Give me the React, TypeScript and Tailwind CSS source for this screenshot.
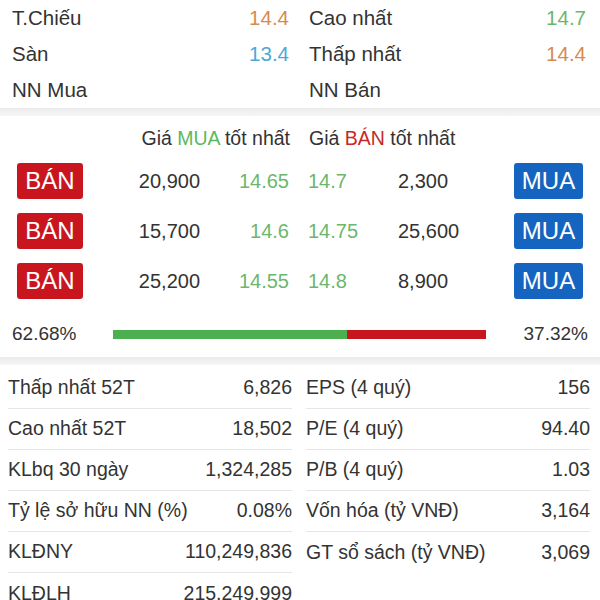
const summary = [
  { l: "T.Chiếu", v: "14.4", vc: "text-[#d88a4f]", r: "Cao nhất", rv: "14.7", rvc: "text-[#6cb76c]" },
  { l: "Sàn", v: "13.4", vc: "text-[#4aa9d7]", r: "Thấp nhất", rv: "14.4", rvc: "text-[#d88a4f]" },
  { l: "NN Mua", v: "", vc: "", r: "NN Bán", rv: "", rvc: "" },
];

const book = [
  { bidVol: "20,900", bid: "14.65", ask: "14.7", askVol: "2,300" },
  { bidVol: "15,700", bid: "14.6", ask: "14.75", askVol: "25,600" },
  { bidVol: "25,200", bid: "14.55", ask: "14.8", askVol: "8,900" },
];

const leftStats = [
  ["Thấp nhất 52T", "6,826"],
  ["Cao nhất 52T", "18,502"],
  ["KLbq 30 ngày", "1,324,285"],
  ["Tỷ lệ sở hữu NN (%)", "0.08%"],
  ["KLĐNY", "110,249,836"],
  ["KLĐLH", "215,249,999"],
];

const rightStats = [
  ["EPS (4 quý)", "156"],
  ["P/E (4 quý)", "94.40"],
  ["P/B (4 quý)", "1.03"],
  ["Vốn hóa (tỷ VNĐ)", "3,164"],
  ["GT sổ sách (tỷ VNĐ)", "3,069"],
];

function Separator() {
  return <div className="h-2 bg-gradient-to-b from-[#ebebeb] to-[#f6f6f6]" />;
}

function StatColumn({ rows }: { rows: string[][] }) {
  return (
    <div className="flex flex-col">
      {rows.map(([label, value], i) => (
        <div
          key={label}
          className={`flex h-[41px] items-center justify-between ${
            i < rows.length - 1 ? "border-b border-[#e6e6e6]" : ""
          }`}
        >
          <span>{label}</span>
          <span>{value}</span>
        </div>
      ))}
    </div>
  );
}

export default function App() {
  return (
    <div
      className="h-[600px] w-[600px] overflow-hidden bg-white text-[#333]"
      style={{ fontFamily: '"Liberation Sans", Arial, sans-serif' }}
    >
      <div className="grid grid-cols-2 text-[20.5px]">
        {summary.map((row) => (
          <div key={row.l} className="col-span-2 grid h-9 grid-cols-2">
            <div className="flex items-center justify-between pl-3 pr-[11px]">
              <span>{row.l}</span>
              <span className={row.vc}>{row.v}</span>
            </div>
            <div className="flex items-center justify-between pl-[9px] pr-[14px]">
              <span>{row.r}</span>
              <span className={row.rvc}>{row.rv}</span>
            </div>
          </div>
        ))}
      </div>

      <Separator />

      <div className="grid h-[44px] grid-cols-2 items-center pt-[2px] text-[19.5px]">
        <div className="pr-[10px] text-right">
          Giá <span className="text-[#5cb85c]">MUA</span> tốt nhất
        </div>
        <div className="pl-[9px]">
          Giá <span className="text-[#c62828]">BÁN</span> tốt nhất
        </div>
      </div>

      <div className="flex flex-col gap-[14px] pt-[3px] text-[20px]">
        {book.map((r) => (
          <div key={r.bidVol} className="flex h-9 items-center">
            <div className="flex w-[300px] items-center pl-[17px]">
              <span className="flex h-9 w-[66px] items-center justify-center rounded-[3px] bg-[#c9161e] text-[24px] text-white">
                BÁN
              </span>
              <span className="w-[117px] text-right">{r.bidVol}</span>
              <span className="w-[89px] text-right text-[#6cb76c]">{r.bid}</span>
            </div>
            <div className="flex flex-1 items-center pl-2 pr-[17px]">
              <span className="w-[90px] text-[#6cb76c]">{r.ask}</span>
              <span className="flex-1">{r.askVol}</span>
              <span className="flex h-9 w-[69px] items-center justify-center rounded-[3px] bg-[#1565c0] text-[24px] text-white">
                MUA
              </span>
            </div>
          </div>
        ))}
      </div>

      <div className="flex h-[58px] items-center px-3 pt-[12px] text-[19px]">
        <span className="w-[101px]">62.68%</span>
        <div className="flex h-[9px] w-[373px]">
          <div className="h-full bg-[#4caf50]" style={{ width: "62.68%" }} />
          <div className="h-full flex-1 bg-[#c8161e]" />
        </div>
        <span className="flex-1 text-right">37.32%</span>
      </div>

      <Separator />

      <div className="grid grid-cols-2 gap-[14px] pl-2 pr-[10px] pt-[3px] text-[19.5px]">
        <StatColumn rows={leftStats} />
        <StatColumn rows={rightStats} />
      </div>
    </div>
  );
}
